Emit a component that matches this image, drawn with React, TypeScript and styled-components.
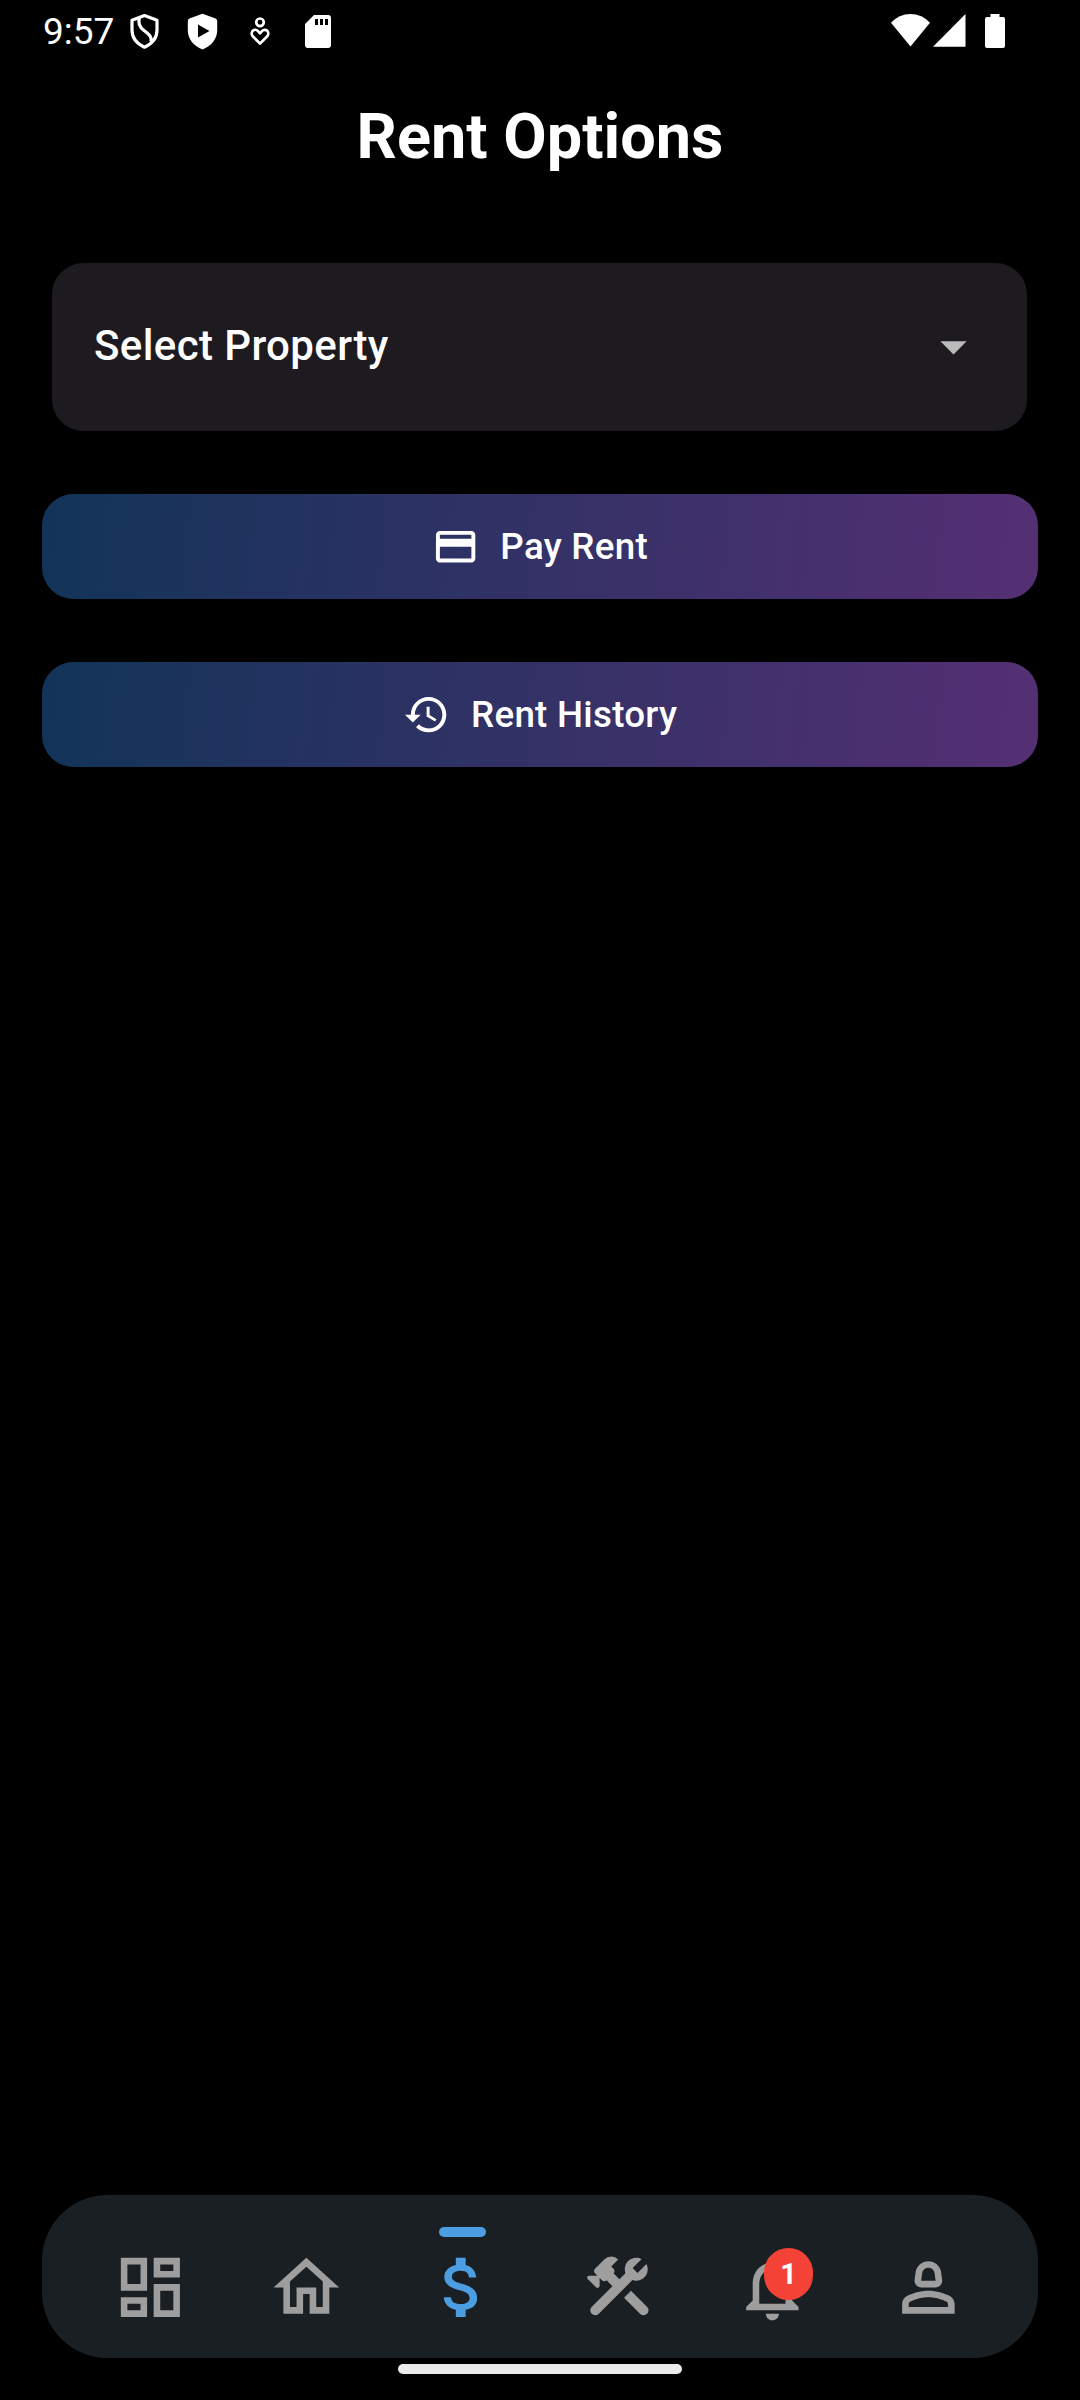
import React from "react";
import styled, { createGlobalStyle } from "styled-components";

const GlobalStyle = createGlobalStyle`
  *, *::before, *::after { box-sizing: border-box; }
  body { margin: 0; background: #000; }
`;

const Screen = styled.div`
  width: 1080px;
  height: 2400px;
  display: flex;
  flex-direction: column;
  background: #000;
  color: #fff;
  font-family: Roboto, "Noto Sans", sans-serif;
  overflow: hidden;
`;

const StatusBar = styled.header`
  height: 63px;
  display: flex;
  justify-content: space-between;
  padding: 0 75px 0 43px;
`;

const StatusGroup = styled.div<{ $gap?: number }>`
  display: flex;
  align-items: center;
  gap: ${(p) => p.$gap ?? 0}px;
`;

const SystemIcons = styled.div`
  display: flex;
  align-items: flex-start;
  gap: 2px;
  padding-top: 14px;
`;

const Clock = styled.span`
  font-size: 37px;
  line-height: 62px;
  width: 86px;
`;

const Icon = styled.svg<{ $w: number; $h?: number }>`
  display: block;
  flex: none;
  width: ${(p) => p.$w}px;
  height: ${(p) => p.$h ?? p.$w}px;
  fill: currentColor;
`;

const Title = styled.h1`
  margin: 0;
  height: 147px;
  text-align: center;
  font-size: 63px;
  font-weight: 700;
  line-height: 147px;
`;

const Content = styled.main`
  flex: 1;
  display: flex;
  flex-direction: column;
  gap: 63px;
  padding: 53px 42px 0;
`;

const PropertySelect = styled.button`
  height: 168px;
  margin: 0 11px 0 10px;
  padding: 0 42px 2px;
  display: flex;
  align-items: center;
  justify-content: space-between;
  border: 0;
  border-radius: 31.5px;
  background: #1d1b20;
  color: #fff;
  font: 500 42px/60px Roboto, "Noto Sans", sans-serif;
  letter-spacing: 0.39px;
`;

const Arrow = styled.span`
  color: #bbbbbc;
`;

const ActionButton = styled.button`
  height: 105px;
  display: flex;
  align-items: center;
  justify-content: center;
  gap: 21px;
  border: 0;
  border-radius: 31.5px;
  background: linear-gradient(96.02deg, #123458, #552f74);
  color: #fff;
  font: 500 36.75px/52px Roboto, "Noto Sans", sans-serif;
  letter-spacing: 0.26px;
`;

const NavBar = styled.nav`
  height: 163px;
  margin: 0 42px;
  padding: 0 32px 0 31px;
  display: grid;
  grid-template-columns: repeat(6, minmax(0, 1fr));
  border-radius: 65.6px;
  background: #1a1f23;
`;

const NavItem = styled.div<{ $active?: boolean }>`
  position: relative;
  display: flex;
  flex-direction: column;
  align-items: center;
  padding: 32px 0 0 ${(p) => (p.$active ? "1.5px" : "0")};
  gap: 11px;
  color: ${(p) => (p.$active ? "#4c9ee3" : "#9e9e9e")};
`;

const Indicator = styled.span<{ $active?: boolean }>`
  width: 47px;
  height: 10px;
  flex: none;
  border-radius: 5px;
  background: ${(p) => (p.$active ? "#4c9ee3" : "transparent")};
`;

const Badge = styled.span`
  position: absolute;
  left: 69px;
  top: 53px;
  width: 49px;
  height: 52px;
  border-radius: 25px;
  background: #f44336;
  color: #fff;
  text-align: center;
  font-size: 29px;
  font-weight: 700;
  line-height: 53px;
`;

const GestureArea = styled.footer`
  height: 42px;
  padding-top: 6px;
`;

const GestureBar = styled.div`
  width: 284px;
  height: 10px;
  margin: 0 auto;
  border-radius: 5px;
  background: #ebebeb;
`;

const NAV: { id: string; path: React.ReactNode; active?: boolean; badge?: number }[] = [
  {
    id: "dashboard",
    path: <path d="M19 5v2h-4V5h4M9 5v6H5V5h4m10 8v6h-4v-6h4M9 17v2H5v-2h4M21 3h-8v6h8V3zM11 3H3v10h8V3zm10 8h-8v10h8V11zm-10 4H3v6h8v-6z" />,
  },
  {
    id: "home",
    path: <path d="M12 5.69l5 4.5V18h-2v-6H9v6H7v-7.81l5-4.5M12 3L2 12h3v8h6v-6h2v6h6v-8h3L12 3z" />,
  },
  {
    id: "rent",
    active: true,
    path: <path d="M11.8 10.9c-2.27-.59-3-1.2-3-2.15 0-1.09 1.01-1.85 2.7-1.85 1.78 0 2.44.85 2.5 2.1h2.21c-.07-1.72-1.12-3.3-3.21-3.81V3h-3v2.16c-1.94.42-3.5 1.68-3.5 3.61 0 2.31 1.91 3.46 4.7 4.13 2.5.6 3 1.48 3 2.41 0 .69-.49 1.79-2.7 1.79-2.06 0-2.87-.92-2.98-2.1h-2.2c.12 2.19 1.76 3.42 3.68 3.83V21h3v-2.15c1.95-.37 3.5-1.5 3.5-3.55 0-2.84-2.43-3.81-4.7-4.4z" />,
  },
  {
    id: "maintenance",
    path: (
      <g transform="translate(0.25 0)">
        <path d="M15.9 13.05l4.94 4.94a1.5 1.5 0 0 1-2.12 2.12l-4.94-4.94z" />
        <path d="M17.5 10c1.93 0 3.5-1.57 3.5-3.5 0-.58-.16-1.12-.41-1.6l-2.7 2.7-1.49-1.49 2.7-2.7c-.48-.25-1.02-.41-1.6-.41C15.57 3 14 4.57 14 6.5c0 .41.08.8.21 1.16l-1.85 1.85-1.78-1.78c.39-.39.39-1.02 0-1.41l-.7-.71L12 3.49a3 3 0 0 0-4.24 0L4.93 6.32c-.39.39-.39 1.02 0 1.41l.71.71H3.11c-.51 0-.77.62-.41.99l2.54 2.54c.39.39 1.1.12 1.1-.44V9.15l.71.71c.39.39 1.02.39 1.41 0l1.78 1.78-6.35 6.35a1.5 1.5 0 0 0 2.12 2.12L16.34 9.79c.36.13.75.21 1.16.21z" />
      </g>
    ),
  },
  {
    id: "notifications",
    badge: 1,
    path: <path d="M12 22c1.1 0 2-.9 2-2h-4c0 1.1.9 2 2 2zm6-6v-5c0-3.07-1.63-5.64-4.5-6.32V4c0-.83-.67-1.5-1.5-1.5s-1.5.67-1.5 1.5v.68C7.64 5.36 6 7.92 6 11v5l-2 2v1h16v-1l-2-2zm-2 1H8v-6c0-2.48 1.51-4.5 4-4.5s4 2.02 4 4.5v6z" />,
  },
  {
    id: "profile",
    path: (
      <path
        fillRule="evenodd"
        d="M18.39 14.56C16.71 13.7 14.53 13 12 13s-4.71.7-6.39 1.56A2.97 2.97 0 0 0 4 17.22V20h16v-2.78c0-1.12-.61-2.15-1.61-2.66zM18 18H6v-.78c0-.38.2-.72.52-.88C7.71 15.73 9.63 15 12 15s4.29.73 5.48 1.34c.32.16.52.5.52.88V18zM9.78 12h4.44c1.21 0 2.14-1.06 1.98-2.26l-.32-2.45C15.57 5.39 13.92 4 12 4S8.43 5.39 8.12 7.29L7.8 9.74c-.16 1.2.77 2.26 1.98 2.26zm.34-4.39C10.25 6.67 11.06 6 12 6s1.75.67 1.88 1.61L14.2 10H9.8l.32-2.39z"
      />
    ),
  },
];

export default function App() {
  return (
    <Screen>
      <GlobalStyle />
      <StatusBar>
        <StatusGroup $gap={27}>
          <StatusGroup>
            <Clock>9:57</Clock>
            <Icon $w={31} $h={37} viewBox="0 0 31 37">
              <path
                d="M15.5 2.6L28 7.2V17c0 7.6-5 13.8-12.5 17.2C8 30.8 3 24.6 3 17V7.2zM10.5 4.5c-1.7 5.5-.3 9.5 4.5 13 5 3.6 8 6 7 11"
                fill="none"
                stroke="currentColor"
                strokeWidth="3.2"
                strokeLinejoin="round"
              />
            </Icon>
          </StatusGroup>
          <Icon $w={31} $h={37} viewBox="0 0 31 37">
            <path
              fillRule="evenodd"
              d="M15.5.7L28.6 5.5Q30.2 6.2 30.2 8v9.5c0 8.5-6 15.5-14.7 19C6.8 33 .8 26 .8 17.5V8Q.8 6.2 2.4 5.5zM11 11.5v13L22.5 18z"
            />
          </Icon>
          <Icon $w={32} $h={37} viewBox="2 0.6 32 37">
            <g fill="none" stroke="currentColor" strokeWidth="2.7" strokeLinejoin="round">
              <circle cx="17" cy="9.9" r="3.8" />
              <path d="M17 31.2l-7-7.1c-1.7-1.8-1.7-4.2-.2-5.7 1.5-1.4 3.8-1.2 5.2.3l2 2.1 2-2.1c1.4-1.5 3.7-1.7 5.2-.3 1.5 1.5 1.5 3.9-.2 5.7z" />
            </g>
          </Icon>
          <Icon $w={32} $h={37} viewBox="3 0 32 37">
            <path
              fillRule="evenodd"
              d="M13 2h14q3 0 3 3v27q0 3-3 3H7q-3 0-3-3V11zM14 6v6h3V6zm5 0v6h3V6zm5 0v6h3V6z"
            />
          </Icon>
        </StatusGroup>
        <SystemIcons>
          <Icon $w={39} $h={33} viewBox="0 0 39 33">
            <path d="M0 8.8Q8 0 19.5 0T39 8.8L19.5 32.5z" />
          </Icon>
          <Icon $w={34} $h={33} viewBox="-1 0 34 33">
            <path d="M32.5 0v32.8H0z" />
          </Icon>
          <Icon $w={37} $h={34} viewBox="-2 0 37 34">
            <path d="M20.5 0h9v3H33q2 0 2 2v27q0 2-2 2H17q-2 0-2-2V5q0-2 2-2h3.5z" />
          </Icon>
        </SystemIcons>
      </StatusBar>

      <Title>Rent Options</Title>

      <Content>
        <PropertySelect>
          Select Property
          <Arrow>
            <Icon $w={63} viewBox="0 0 24 24">
              <path d="M7 10l5 5 5-5z" />
            </Icon>
          </Arrow>
        </PropertySelect>
        <ActionButton>
          <Icon $w={47.25} viewBox="0 0 24 24">
            <path d="M20 4H4c-1.11 0-1.99.89-1.99 2L2 18c0 1.11.89 2 2 2h16c1.11 0 2-.89 2-2V6c0-1.11-.89-2-2-2zm0 14H4v-6h16v6zm0-10H4V6h16v2z" />
          </Icon>
          Pay Rent
        </ActionButton>
        <ActionButton>
          <Icon $w={47.25} viewBox="0 0 24 24">
            <path d="M13 3c-4.97 0-9 4.03-9 9H1l3.89 3.89.07.14L9 12H6c0-3.87 3.13-7 7-7s7 3.13 7 7-3.13 7-7 7c-1.93 0-3.68-.79-4.94-2.06l-1.42 1.42C8.27 19.99 10.51 21 13 21c4.97 0 9-4.03 9-9s-4.03-9-9-9zm-1 5v5l4.28 2.54.72-1.21-3.5-2.08V8H12z" />
          </Icon>
          Rent History
        </ActionButton>
      </Content>

      <NavBar>
        {NAV.map((item) => (
          <NavItem key={item.id} $active={item.active}>
            <Indicator $active={item.active} />
            <Icon $w={78.75} viewBox="0 0 24 24">
              {item.path}
            </Icon>
            {item.badge && <Badge>{item.badge}</Badge>}
          </NavItem>
        ))}
      </NavBar>
      <GestureArea>
        <GestureBar />
      </GestureArea>
    </Screen>
  );
}
